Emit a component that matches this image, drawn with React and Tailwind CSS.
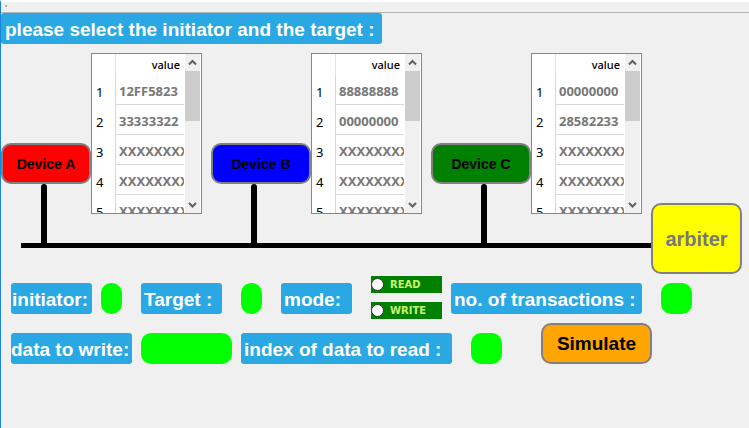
import React from "react";

const devices = [
  {
    name: "Device A",
    box: "w-[90px] bg-[#ff0000]",
    stem: "ml-10",
    rows: ["12FF5823", "33333322", "XXXXXXXX", "XXXXXXXX", "XXXXXXXX"],
  },
  {
    name: "Device B",
    box: "w-[100px] bg-[#0000ff]",
    stem: "ml-10",
    rows: ["88888888", "00000000", "XXXXXXXX", "XXXXXXXX", "XXXXXXXX"],
  },
  {
    name: "Device C",
    box: "w-[100px] bg-[#008000]",
    stem: "ml-[50px]",
    rows: ["00000000", "28582233", "XXXXXXXX", "XXXXXXXX", "XXXXXXXX"],
  },
];

function Chevron({ down }) {
  return (
    <svg width="9" height="7" viewBox="0 0 9 7" fill="none" stroke="#606060" strokeWidth="2">
      <path d={down ? "M1 2 L4.5 5.5 L8 2" : "M1 5.5 L4.5 2 L8 5.5"} />
    </svg>
  );
}

function MemoryTable({ name, rows }) {
  return (
    <div className="flex h-[161px] w-[111px] overflow-hidden border border-[#828790] bg-white">
      <div className="w-[92px] overflow-hidden">
        <table aria-label={name + " memory"} className="w-full table-fixed border-separate border-spacing-0">
          <thead>
            <tr className="h-[21px]">
              <th className="w-6 border-r border-[#e5e5e5] p-0" />
              <th className="p-0 pr-1 text-right font-['Noto_Sans',sans-serif] text-[11px] leading-5 font-medium text-black">
                value
              </th>
            </tr>
          </thead>
          <tbody>
            {rows.map((value, i) => (
              <tr key={i} className="h-[30px]">
                <th className="border-r border-[#d8d8d8] p-0 pt-[3px] pl-1 text-left font-['Noto_Sans',sans-serif] text-[13px] leading-4 font-normal text-black">
                  {i + 1}
                </th>
                <td className="overflow-hidden border-b border-[#d8d8d8] p-0 pt-[2px] pl-[3px] font-['Noto_Sans',sans-serif] text-[13px] leading-4 font-bold whitespace-nowrap text-[#787878]">
                  {value}
                </td>
              </tr>
            ))}
          </tbody>
        </table>
      </div>
      <div className="mx-px flex w-[15px] flex-col bg-[#f0f0f0]">
        <button aria-label="Scroll up" className="flex h-[17px] items-center justify-center">
          <Chevron />
        </button>
        <div className="h-[50px] bg-[#cdcdcd]" />
        <button aria-label="Scroll down" className="mt-auto flex h-[17px] items-center justify-center">
          <Chevron down />
        </button>
      </div>
    </div>
  );
}

function Device({ name, box, stem, rows }) {
  return (
    <div className="flex h-[190px] shrink-0 items-start">
      <div className="flex h-full flex-col pt-[90px]">
        <button
          className={
            "h-[41px] rounded-[10px] border-2 border-[#808080] pt-px text-sm font-bold text-black " + box
          }
        >
          {name}
        </button>
        <div className={"w-1.5 flex-1 rounded-t-sm bg-black " + stem} />
      </div>
      <MemoryTable name={name} rows={rows} />
    </div>
  );
}

const tag =
  "h-[31px] shrink-0 overflow-hidden rounded-[3px] bg-[#29a8e4] text-[19px] leading-[33px] font-bold whitespace-nowrap text-white";
const field = "h-[31px] shrink-0 rounded-[10px] bg-[#00ff00] px-1 text-center text-base font-bold text-black outline-none";

function Mode({ label }) {
  return (
    <label className="flex h-[17px] items-center bg-[#008000] font-['DejaVu_Sans',sans-serif] text-[10px] leading-4 font-bold text-[#c8f56e]">
      <input
        type="radio"
        name="mode"
        className="mr-[6px] size-[13px] appearance-none rounded-full border border-[#333333] bg-white checked:border-4"
      />
      {label}
    </label>
  );
}

export default function App() {
  return (
    <main className="min-h-screen overflow-hidden border-t-2 border-l border-t-white border-l-[#1883d7] bg-[#f0f0f0] font-['Liberation_Sans',Arial,sans-serif]">
      <header className="flex h-[11px] border-b border-[#b4b4b4] pt-[3px] pl-1">
        <span className="size-0.5 bg-[#b4b4b4]" />
      </header>
      <h1 className={tag + " w-[381px] pl-1"}>please select the initiator and the target :</h1>

      <section className="mt-[9px] flex items-end">
        <div className="mb-[26px] w-[650px] shrink-0">
          <div className="flex gap-[9px]">
            {devices.map((d) => (
              <Device key={d.name} {...d} />
            ))}
          </div>
          <div className="ml-5 h-[5px] bg-black" />
        </div>
        <button className="h-[71px] w-[91px] shrink-0 rounded-[10px] border-2 border-[#808080] bg-[#ffff00] pt-px text-xl font-bold text-[#787878]">
          arbiter
        </button>
      </section>

      <form onSubmit={(e) => e.preventDefault()}>
        <div className="mt-[2px] ml-[10px] flex h-[45px] items-center">
          <label htmlFor="initiator" className={tag + " w-[81px] pl-px"}>initiator:</label>
          <input id="initiator" className={field + " ml-[9px] w-[21px]"} />
          <label htmlFor="target" className={tag + " ml-[19px] w-[81px] pl-[3px]"}>Target :</label>
          <input id="target" className={field + " ml-[19px] w-[21px]"} />
          <span id="mode-label" className={tag + " ml-[19px] w-[71px] pl-[3px]"}>mode:</span>
          <div role="radiogroup" aria-labelledby="mode-label" className="ml-[19px] flex w-[71px] shrink-0 flex-col gap-[9px] pb-[2px]">
            <Mode label="READ" />
            <Mode label="WRITE" />
          </div>
          <label htmlFor="count" className={tag + " ml-[9px] w-[191px] pl-[3px]"}>no. of transactions :</label>
          <input id="count" className={field + " ml-[19px] w-[31px]"} />
        </div>
        <div className="mt-[2px] ml-[10px] flex items-end">
          <label htmlFor="data" className={tag + " w-[121px]"}>data to write:</label>
          <input id="data" className={field + " ml-[9px] w-[91px]"} />
          <label htmlFor="index" className={tag + " ml-[9px] w-[211px] pl-[3px]"}>index of data to read :</label>
          <input id="index" className={field + " ml-[19px] w-[31px]"} />
          <button
            type="submit"
            className="ml-[39px] h-[41px] w-[111px] shrink-0 rounded-[10px] border-2 border-[#808080] bg-[#ffa500] pt-[2px] text-[19px] font-bold text-black"
          >
            Simulate
          </button>
        </div>
      </form>
    </main>
  );
}
